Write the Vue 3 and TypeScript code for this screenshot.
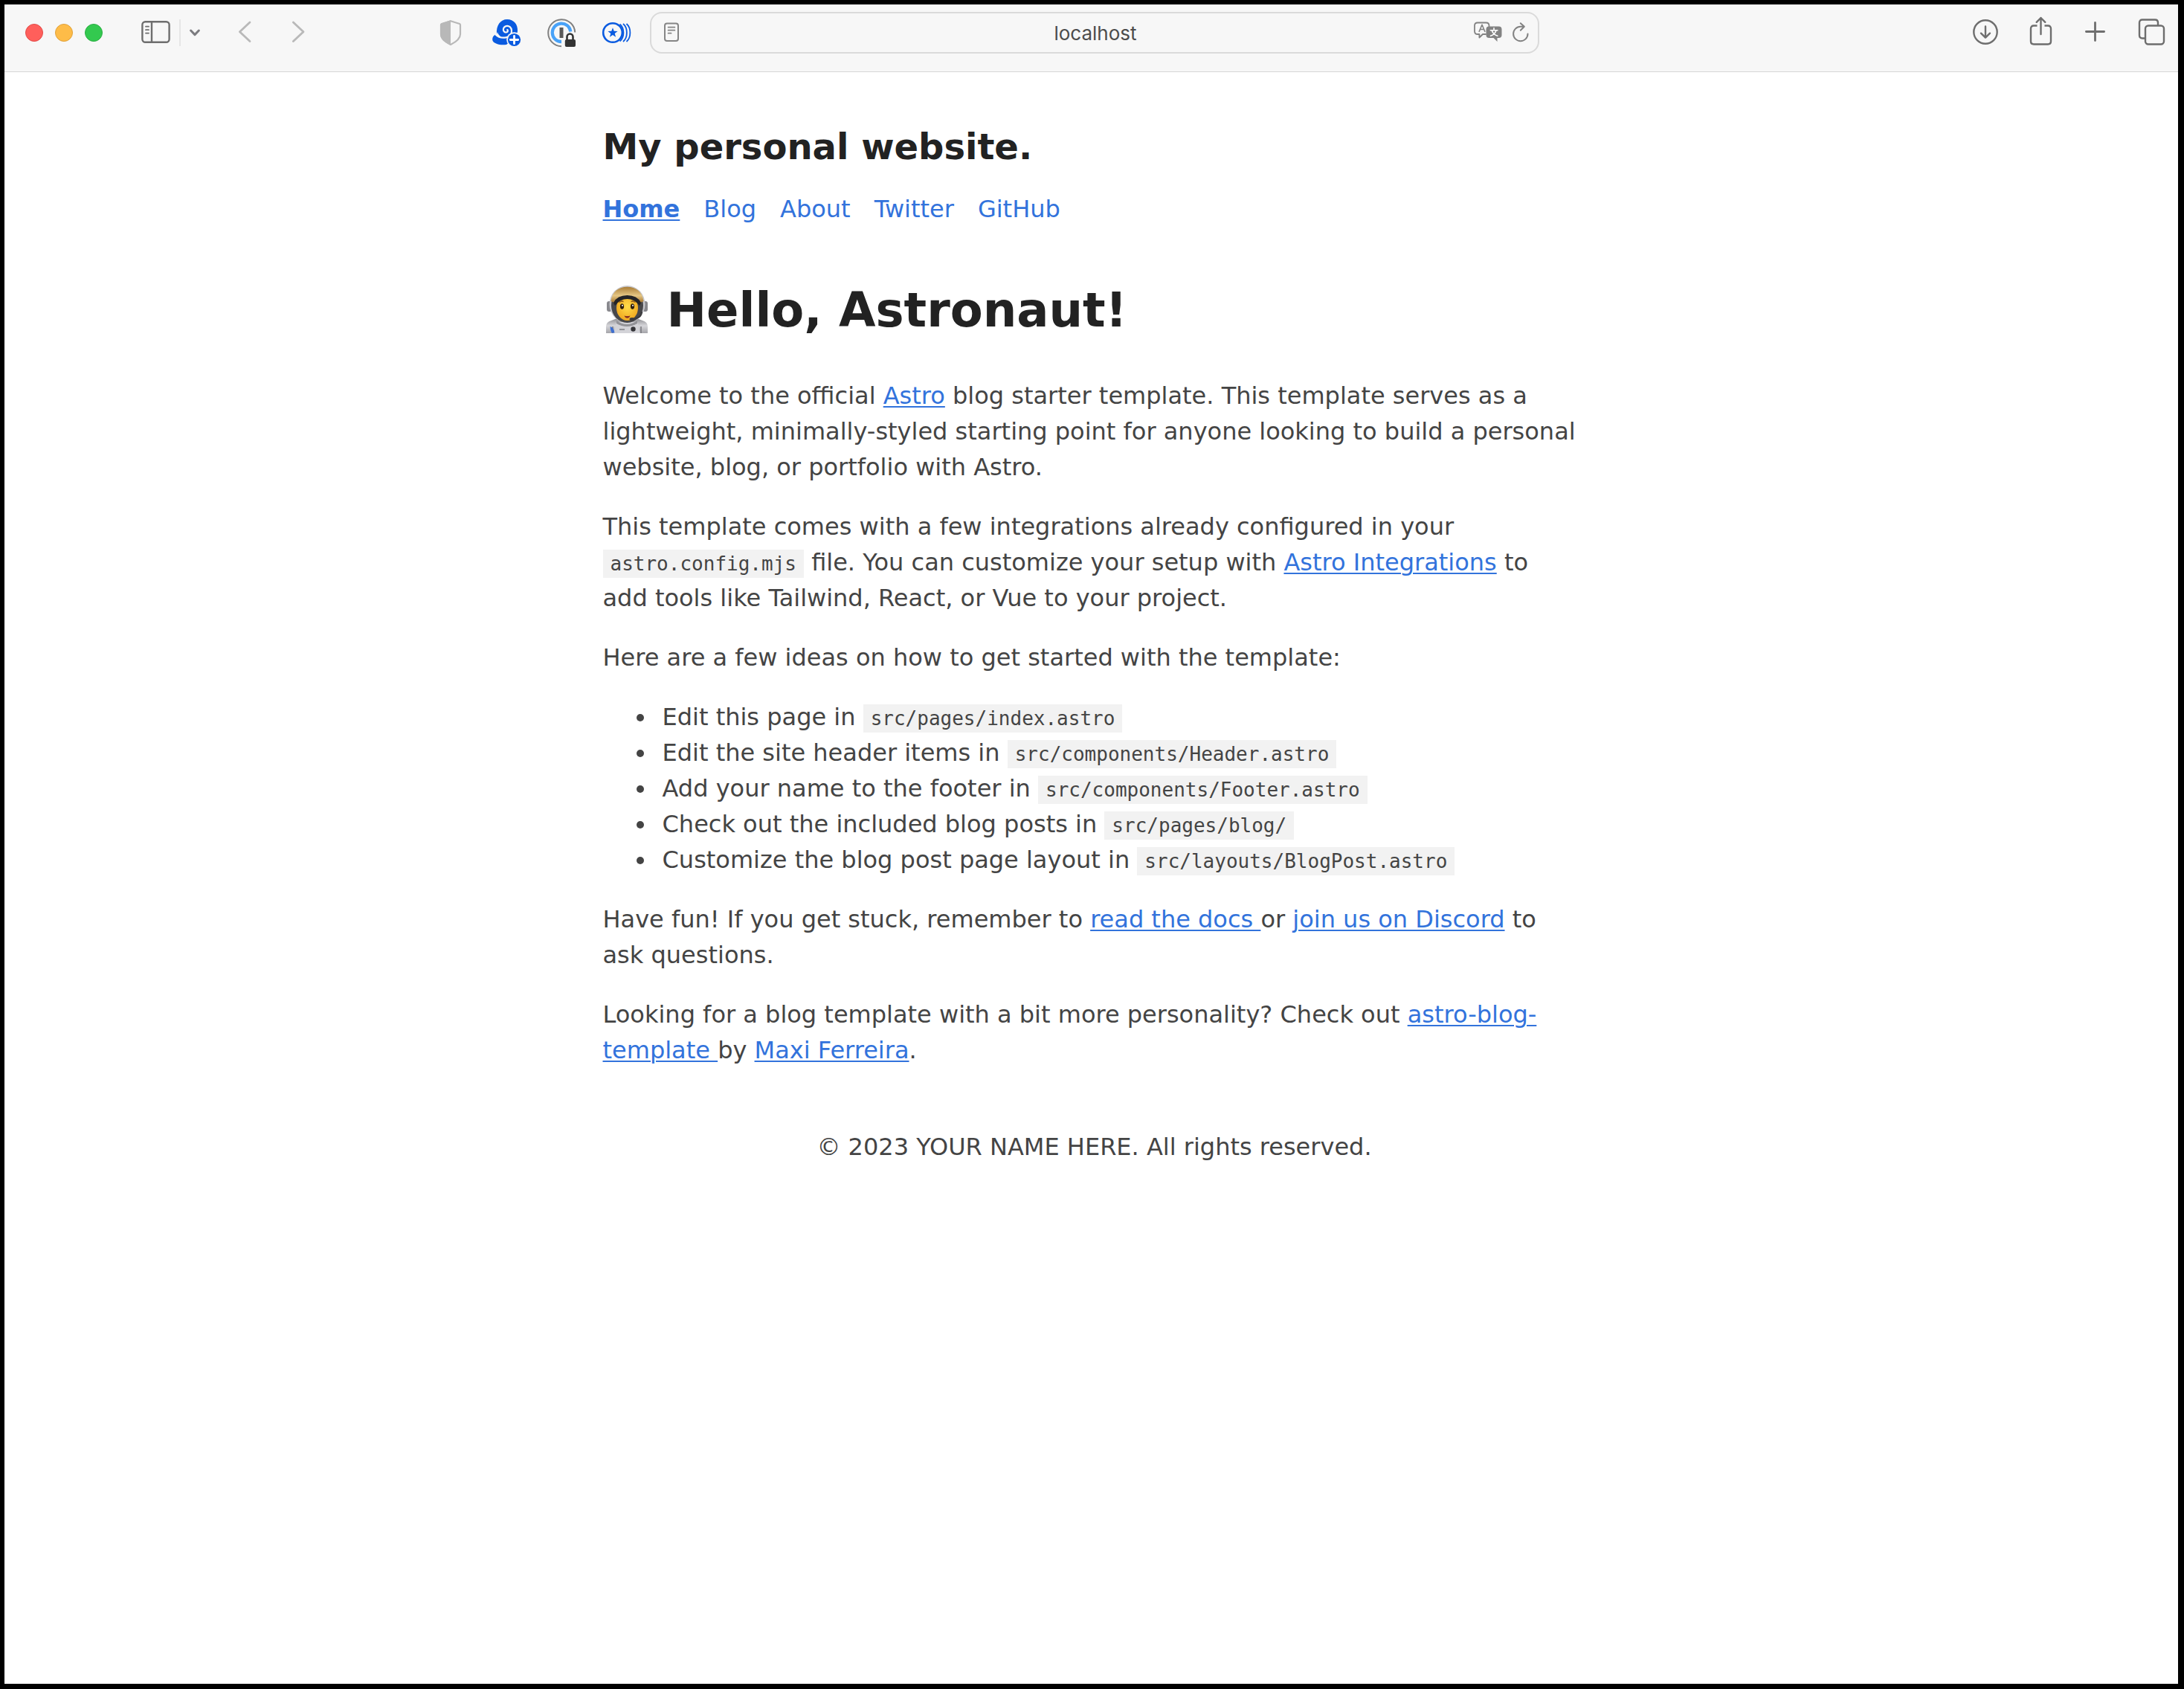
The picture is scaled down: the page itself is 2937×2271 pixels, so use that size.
<script setup lang="ts">
interface NavLink {
  label: string
  current?: boolean
}

interface Idea {
  text: string
  path: string
}

const navLinks: NavLink[] = [
  { label: 'Home', current: true },
  { label: 'Blog' },
  { label: 'About' },
  { label: 'Twitter' },
  { label: 'GitHub' },
]

const ideas: Idea[] = [
  { text: 'Edit this page in', path: 'src/pages/index.astro' },
  { text: 'Edit the site header items in', path: 'src/components/Header.astro' },
  { text: 'Add your name to the footer in', path: 'src/components/Footer.astro' },
  { text: 'Check out the included blog posts in', path: 'src/pages/blog/' },
  { text: 'Customize the blog post page layout in', path: 'src/layouts/BlogPost.astro' },
]
</script>

<template>
  <div class="window">
    <div class="toolbar">
      <div class="side">
        <div class="lights">
          <button class="light red" aria-label="Close"></button>
          <button class="light amber" aria-label="Minimize"></button>
          <button class="light green" aria-label="Zoom"></button>
        </div>
        <div class="sidebar-tools">
          <button aria-label="Sidebar">
            <svg width="40" height="36" viewBox="0 0 40 36" fill="none" stroke="#6e6e6e" stroke-width="2.4" stroke-linecap="round">
              <rect x="1.4" y="3.2" width="36.2" height="27.6" rx="4" />
              <path d="M14 3.5v27" />
              <path d="M6 9.7h4M6 14.2h4M6 18.6h4" stroke-width="1.8" />
            </svg>
          </button>
          <span class="divider"></span>
          <button aria-label="Tab groups">
            <svg width="16" height="36" viewBox="0 0 16 36" fill="none" stroke="#7c7c80" stroke-width="3" stroke-linecap="round" stroke-linejoin="round">
              <path d="M2.6 15l5.4 5.6 5.4-5.6" />
            </svg>
          </button>
        </div>
        <div class="history">
          <button aria-label="Back">
            <svg width="18" height="36" viewBox="0 0 18 36" fill="none" stroke="#b9b9b9" stroke-width="2.8" stroke-linecap="round" stroke-linejoin="round">
              <path d="M16 4L2.4 16.8 16 29.6" />
            </svg>
          </button>
          <button aria-label="Forward">
            <svg width="18" height="36" viewBox="0 0 18 36" fill="none" stroke="#b9b9b9" stroke-width="2.8" stroke-linecap="round" stroke-linejoin="round">
              <path d="M2.4 4L16 16.8 2.4 29.6" />
            </svg>
          </button>
        </div>
        <div class="extensions">
          <button aria-label="Privacy report">
            <svg width="40" height="40" viewBox="0 0 40 40">
              <path d="M19 4.2L31 8q1 .4 1 1.5V22c0 7-7 11-13 14C13 33 6 29 6 22V9.5Q6 8.4 7 8z" fill="none" stroke="#b8b8b8" stroke-width="2.2" stroke-linejoin="round" />
              <path d="M19 3.2L7 7.2Q5 8 5 9.5V22c0 7 6 11 14 15z" fill="#b8b8b8" />
            </svg>
          </button>
          <button aria-label="Nautilus extension">
            <svg width="40" height="40" viewBox="0 0 40 40">
              <path d="M7 22C6 10 12 2 21 2c9 0 14.5 7 14 15.5-.3 5-3 9-8 13L20 36C11 37 4 35 1.6 31 .4 27 2.500 24 5 22.500c2 2.500 5 3.500 9 3.300C9 24 8 19 8 19z" fill="#0a5be0" />
              <path d="M5.500 22.500c4 4 9 4.800 14 3.800 5-1 8-5 7.500-9.500-.4-4-3.500-6.300-6.500-5.900-3 .3-5 2.900-4.600 5.500.4 2.400 2.600 3.600 4.500 2.900 1.500-.6 1.900-2.200.9-3.200" fill="none" stroke="#f7f7f7" stroke-width="2.2" stroke-linecap="round" />
              <circle cx="30.5" cy="29.5" r="10.3" fill="#f7f7f7" />
              <circle cx="30.5" cy="29.5" r="8.6" fill="#0a5be0" />
              <path d="M30.5 24.3v10.4M25.3 29.5h10.4" stroke="#fff" stroke-width="2.8" stroke-linecap="round" />
            </svg>
          </button>
          <button aria-label="Password manager">
            <svg width="40" height="40" viewBox="0 0 40 40" fill="none">
              <path d="M20 38.2A18 18 0 1 1 38.200 19.500" stroke="#808080" stroke-width="2" />
              <path d="M20 32.2A12.300 12.300 0 1 1 32.300 18.500" stroke="#48a2f8" stroke-width="4.2" />
              <rect x="17.5" y="13" width="5" height="14" fill="#5a5a5a" />
              <path d="M27.5 30v-4.500a4 4 0 0 1 8 0V30" stroke="#333" stroke-width="2.6" />
              <rect x="24.8" y="29" width="14.2" height="10" rx="2" fill="#333" />
            </svg>
          </button>
          <button aria-label="Rewards">
            <svg width="40" height="40" viewBox="0 0 40 40" fill="none" stroke="#0a5be0">
              <circle cx="15" cy="20" r="12.8" stroke-width="2.6" />
              <path d="M15 13.2l1.7 4.6 4.900.2-3.900 3 1.400 4.700-4.100-2.700-4.100 2.700 1.400-4.700-3.900-3 4.900-.2z" fill="#0a5be0" stroke="none" />
              <path d="M24.5 8.5C31 13.5 31 26.5 24.5 31.5M29 8c6.500 5.500 6.500 18.500 0 24M33.500 8c6.500 5.500 6.500 18.500 0 24" stroke-width="1.8" />
            </svg>
          </button>
        </div>
      </div>

      <div class="address">
        <button aria-label="Reader">
          <svg width="20" height="28" viewBox="0 0 20 28" fill="none" stroke="#858585" stroke-width="2" stroke-linecap="round">
            <rect x="1" y="1.4" width="18" height="23.6" rx="3" />
            <path d="M5.600 6.700h8.800M5.600 10.700h8.800M5.600 14.700h4" stroke-width="1.7" />
          </svg>
        </button>
        <input type="text" value="localhost" aria-label="Address" />
        <button aria-label="Translate">
          <svg width="38" height="30" viewBox="0 0 38 30" fill="none" stroke="#828282" stroke-linecap="round" stroke-linejoin="round">
            <path d="M16 17h-4l-4.600 4.500V17H5Q1 17 1 13V5.500Q1 1.500 5 1.500h11.500q4 0 4 4V7" stroke-width="1.8" />
            <path d="M7.200 13.300L11 4.300l3.800 9M8.500 10.500h5" stroke-width="1.6" />
            <path d="M20.500 6.500h13q4 0 4 4V18q0 4-4 4h-2v5l-5-5h-6q-4 0-4-4v-7.500q0-4 4-4z" fill="#828282" stroke="none" />
            <path d="M27 8.800v2.400M22.300 11.800h9.600M30 12c-1 3.200-4 6.200-7.500 7.300M24.300 12c1 3.200 4 6.200 7.500 7.300" stroke="#fff" stroke-width="1.6" />
          </svg>
        </button>
        <button aria-label="Reload">
          <svg width="22" height="30" viewBox="0 0 22 30" fill="none" stroke="#828282" stroke-width="2" stroke-linecap="round" stroke-linejoin="round">
            <path d="M20.500 16.500A9.700 9.700 0 1 1 10.800 6.800H15.500M10.800 2.200L15.800 6.800l-5 5" />
          </svg>
        </button>
      </div>

      <div class="actions">
        <button aria-label="Downloads">
          <svg width="36" height="40" viewBox="0 0 36 40" fill="none" stroke="#6e6e6e" stroke-width="2.4" stroke-linecap="round" stroke-linejoin="round">
            <circle cx="17" cy="19" r="15.7" />
            <path d="M17 11.5v15M11 20.7l6 6 6-6" />
          </svg>
        </button>
        <button aria-label="Share">
          <svg width="36" height="40" viewBox="0 0 36 40" fill="none" stroke="#6e6e6e" stroke-width="2.4" stroke-linecap="round" stroke-linejoin="round" overflow="visible">
            <path d="M12.500 10.500H8q-4 0-4 4v17q0 4 4 4h19q4 0 4-4v-17q0-4-4-4h-4.500" stroke-linecap="butt" />
            <path d="M17.500 22V0M11.700 5.800l5.800-5.800 5.800 5.800" />
          </svg>
        </button>
        <button aria-label="New tab">
          <svg width="36" height="40" viewBox="0 0 36 40" fill="none" stroke="#6e6e6e" stroke-width="2.8" stroke-linecap="round">
            <path d="M16.500 6.400v24.200M4.400 18.500h24.200" />
          </svg>
        </button>
        <button aria-label="Tab overview">
          <svg width="36" height="40" viewBox="0 0 36 40" fill="none" stroke="#6e6e6e" stroke-width="2.4" stroke-linejoin="round" overflow="visible">
            <path d="M9 27.500H6q-4 0-4-4v-17q0-4 4-4h17q4 0 4 4V10" />
            <rect x="10" y="10.5" width="25" height="25" rx="4" />
          </svg>
        </button>
      </div>
    </div>

    <div class="page">
      <header>
        <h2>My personal website.</h2>
        <nav>
          <a v-for="link in navLinks" :key="link.label" href="#" :class="{ current: link.current }">{{ link.label }}</a>
        </nav>
      </header>

      <main>
        <h1>
          <svg class="astronaut" width="64" height="64" viewBox="0 0 64 64" aria-hidden="true">
            <defs>
              <linearGradient id="suit" x1="0" y1="0" x2="0" y2="1">
                <stop offset="0" stop-color="#8d8d92" />
                <stop offset="0.5" stop-color="#d6d6da" />
                <stop offset="1" stop-color="#a5a5aa" />
              </linearGradient>
              <linearGradient id="visor" x1="0" y1="0" x2="0" y2="1">
                <stop offset="0" stop-color="#a97d36" />
                <stop offset="0.55" stop-color="#e5c684" />
                <stop offset="1" stop-color="#a5742c" />
              </linearGradient>
              <radialGradient id="face" cx="0.5" cy="0.45" r="0.6">
                <stop offset="0" stop-color="#ffdc4a" />
                <stop offset="1" stop-color="#eea41c" />
              </radialGradient>
            </defs>
            <path d="M4 64V55q0-6 7-8l8-3h26l8 3q7 2 7 8v9z" fill="url(#suit)" />
            <path d="M13 64v-9M51 64v-9" stroke="#77777c" stroke-width="1.5" />
            <path d="M18 49h28l4 15H14z" fill="#d3d3d8" />
            <path d="M18 47q14 10 28 0v4q-14 8-28 0z" fill="#929297" />
            <rect x="5" y="21" width="7" height="14" rx="3" fill="#88888d" />
            <rect x="53" y="21" width="7" height="14" rx="3" fill="#88888d" />
            <ellipse cx="32.5" cy="25" rx="24" ry="25" fill="#c8c8cd" />
            <ellipse cx="32.5" cy="27" rx="21.5" ry="23" fill="#47474a" />
            <ellipse cx="32.5" cy="30" rx="14.5" ry="17" fill="url(#face)" />
            <path d="M10.500 21C12 8 21 1.800 32.500 1.800S53 8 54.500 21L50 23q-6-9-17.500-9T15 23z" fill="url(#visor)" />
            <path d="M14 23q5-10 18.500-10T51 23l-2 4q-7-9-16.500-9T16 27z" fill="#242426" />
            <ellipse cx="25.5" cy="28" rx="2.6" ry="3.8" fill="#30200f" />
            <ellipse cx="39.5" cy="28" rx="2.6" ry="3.8" fill="#30200f" />
            <circle cx="26" cy="26.8" r="1" fill="#fff" />
            <circle cx="40" cy="26.8" r="1" fill="#fff" />
            <path d="M21.500 22.300q3-2 6-.7M37.500 21.600q3-1.300 6 .7" fill="none" stroke="#95601a" stroke-width="1.6" />
            <path d="M28.500 40.500q4 1.200 8 0-1.400 3.200-4 3.200t-4-3.200z" fill="#8c2f20" />
            <path d="M52 35q0 9-13 10" fill="none" stroke="#3b3b3e" stroke-width="2" />
            <ellipse cx="39" cy="45" rx="3.5" ry="2" fill="#3b3b3e" />
            <path d="M9.500 55q5 1 6 8.500h-4q-2-4-2-8.500z" fill="#3d6fd2" />
            <circle cx="40.5" cy="58.5" r="3.2" fill="#343438" />
            <path d="M22 59h7" stroke="#929297" stroke-width="2" />
          </svg>
          <span>Hello, Astronaut!</span>
        </h1>

        <p>
          Welcome to the official <a href="#">Astro</a> blog starter template. This template serves as a
          <br />lightweight, minimally-styled starting point for anyone looking to build a personal
          <br />website, blog, or portfolio with Astro.
        </p>
        <p>
          This template comes with a few integrations already configured in your
          <br /><code>astro.config.mjs</code> file. You can customize your setup with <a href="#">Astro Integrations</a> to
          <br />add tools like Tailwind, React, or Vue to your project.
        </p>
        <p>Here are a few ideas on how to get started with the template:</p>
        <ul>
          <li v-for="idea in ideas" :key="idea.path">{{ idea.text }} <code>{{ idea.path }}</code></li>
        </ul>
        <p>
          Have fun! If you get stuck, remember to <a href="#">read the docs&#32;</a>or <a href="#">join us on Discord</a> to
          <br />ask questions.
        </p>
        <p>
          Looking for a blog template with a bit more personality? Check out <a href="#">astro-blog-<br />template&#32;</a>by
          <a href="#">Maxi Ferreira</a>.
        </p>
      </main>

      <footer>© 2023 YOUR NAME HERE. All rights reserved.</footer>
    </div>
  </div>
</template>

<style>
body {
  margin: 0;
  background: #fff;
}
</style>

<style scoped>
.window {
  box-sizing: border-box;
  min-height: 100vh;
  border: solid #000;
  border-width: 6px 8px 7px 6px;
  background: #fff;
}

button {
  display: block;
  flex: none;
  padding: 0;
  border: 0;
  background: none;
}

svg {
  display: block;
}

.toolbar {
  display: grid;
  grid-template-columns: 1fr minmax(0, 1196px) 1fr;
  align-items: center;
  padding: 10px 18px 24px 26px;
  border-bottom: 1px solid #d6d6d6;
  background: #f7f7f7;
}

.side,
.lights,
.sidebar-tools,
.history,
.extensions,
.actions {
  display: flex;
  align-items: center;
}

.lights {
  gap: 16px;
  margin: 0 52px 0 2px;
}

.light {
  box-sizing: border-box;
  width: 24px;
  height: 24px;
  border: 1px solid;
  border-radius: 50%;
}

.red {
  border-color: #e24b48;
  background: #ff5f5b;
}

.amber {
  border-color: #e0a13a;
  background: #febc48;
}

.green {
  border-color: #2bae43;
  background: #33c94f;
}

.sidebar-tools {
  gap: 11px;
  margin-right: 50px;
}

.divider {
  width: 2px;
  height: 36px;
  background: #e6e6e6;
}

.history {
  gap: 54px;
}

.extensions {
  gap: 34px;
  margin: 0 25px 0 auto;
}

.address {
  box-sizing: border-box;
  display: flex;
  align-items: center;
  gap: 14px;
  height: 56px;
  padding: 0 12px 0 17px;
  border: 2px solid #dadada;
  border-radius: 16px;
}

.address input {
  flex: 1;
  min-width: 0;
  padding: 2px 0 0 52px;
  border: 0;
  background: none;
  color: #4c4c4c;
  font: 26px/32px Inter, sans-serif;
  text-align: center;
  outline: none;
}

.actions {
  justify-content: flex-end;
  gap: 38px;
}

.page {
  box-sizing: border-box;
  max-width: 1330px;
  margin: 0 auto;
  padding: 71px 0 0 8px;
  color: #444;
  font: 32px/48px "DejaVu Sans", Verdana, sans-serif;
}

h1,
h2 {
  margin: 0;
  color: #222;
  font-weight: 700;
}

h2 {
  font-size: 48px;
  line-height: 58px;
}

nav {
  display: flex;
  gap: 32px;
  margin-top: 31px;
}

a {
  color: #3273dc;
  text-decoration: underline 2px;
  text-underline-offset: 3px;
}

nav a {
  text-decoration: none;
}

nav .current {
  font-weight: 700;
  text-decoration: underline 2px;
}

h1 {
  display: flex;
  align-items: center;
  gap: 22px;
  margin: 74px 0 52px;
  font-size: 64px;
  line-height: 77px;
}

.astronaut {
  margin-bottom: 3px;
}

p,
ul {
  margin: 0 0 32px;
}

ul {
  padding-left: 72px;
}

li {
  padding-left: 8px;
}

code {
  padding: 4px 10px;
  background: #f2f2f2;
  font: 26px/30px "DejaVu Sans Mono", Menlo, monospace;
}

footer {
  margin-top: 82px;
  text-align: center;
}
</style>
